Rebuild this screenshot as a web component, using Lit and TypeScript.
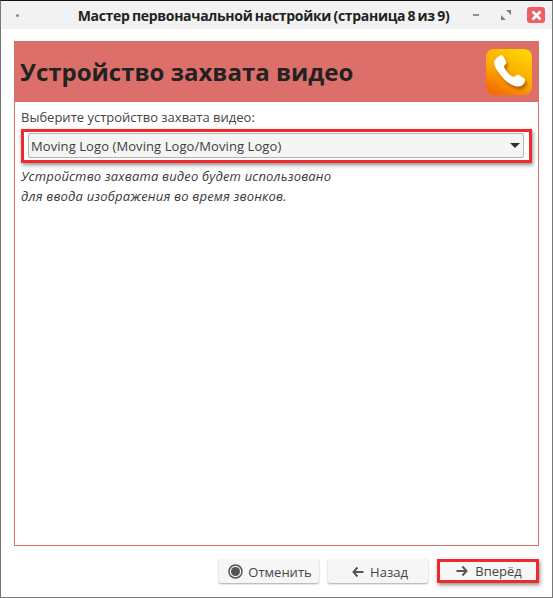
import { LitElement, html, css } from 'lit';
import { customElement } from 'lit/decorators.js';

@customElement('app-root')
export class AppRoot extends LitElement {
  static styles = css`
    :host {
      display: block;
      width: 553px;
      height: 598px;
      box-sizing: border-box;
      background: #fff;
      border-top: 1px solid #111;
      border-left: 1px solid #777;
      border-right: 1px solid #777;
      border-bottom: 1px solid #777;
      font-family: 'Open Sans', 'Noto Sans', sans-serif;
      color: #2e2e2e;
      font-size: 13px;
    }
    .window {
      height: 100%;
      display: flex;
      flex-direction: column;
    }
    .titlebar {
      height: 28px;
      flex: none;
      background: #f2f2f2;
      display: grid;
      grid-template-columns: auto 1fr auto;
      align-items: center;
      padding: 0 7px;
    }
    .dot {
      width: 3px;
      height: 3px;
      margin-left: 8px;
      border-radius: 50%;
      background: #8a8a8a;
    }
    .title {
      padding-left: 36px;
      text-align: center;
      font-weight: 700;
      font-size: 14px;
      letter-spacing: -0.3px;
      word-spacing: -1px;
      color: #222;
      white-space: nowrap;
    }
    .controls {
      display: flex;
      align-items: center;
      justify-content: flex-end;
      gap: 16px;
    }
    .controls svg {
      display: block;
    }
    .restore {
      margin-left: 5px;
    }
    .close {
      width: 18px;
      height: 16px;
      background: #ec5f63;
      border-radius: 3px;
      display: flex;
      align-items: center;
      justify-content: center;
    }
    .content {
      flex: 1;
      min-height: 0;
      display: flex;
      flex-direction: column;
      padding: 12px 13px 0 13px;
    }
    .frame {
      height: 505px;
      flex: none;
      box-sizing: border-box;
      border: 1px solid #dd6f6b;
      display: flex;
      flex-direction: column;
    }
    .banner {
      height: 61px;
      margin: -1px -1px 0;
      flex: none;
      background: #dd6f6b;
      display: flex;
      align-items: center;
      justify-content: space-between;
      padding: 0 7px 0 6px;
    }
    .banner h1 {
      margin: 0;
      font-size: 24px;
      line-height: 61px;
      font-weight: 700;
      color: #222;
      white-space: nowrap;
    }
    .logo {
      display: block;
      width: 46px;
      height: 46px;
    }
    .body {
      padding: 6px 6px 0;
    }
    .label {
      line-height: 18px;
      color: #444;
    }
    .mark {
      border: 3px solid #ee2a2f;
      box-shadow: 1px 2px 4px rgba(0, 0, 0, 0.45);
    }
    .select-mark {
      margin-top: 3px;
      padding: 1px 5px 2px 4px;
    }
    .select {
      height: 25px;
      box-sizing: border-box;
      border: 1px solid #b5b5b5;
      border-radius: 2px;
      background: #f5f5f5;
      display: flex;
      align-items: center;
      justify-content: space-between;
      padding: 0 3px 0 2px;
      color: #3d3d3d;
      letter-spacing: 0.08px;
    }
    .arrow {
      width: 0;
      height: 0;
      border-left: 5px solid transparent;
      border-right: 5px solid transparent;
      border-top: 5px solid #2e2e2e;
    }
    .hint {
      margin-top: 3px;
      font-style: italic;
      line-height: 20px;
      color: #3a3a3a;
      letter-spacing: 0.18px;
    }
    .buttons {
      display: flex;
      justify-content: flex-end;
      gap: 9px;
      margin-top: 13px;
    }
    button {
      height: 24px;
      box-sizing: border-box;
      border: 0;
      border-radius: 2px;
      background: #f6f6f6;
      box-shadow: 0 1px 2px rgba(0, 0, 0, 0.35);
      font: inherit;
      color: #444;
      display: flex;
      align-items: center;
      justify-content: center;
      gap: 5px;
      padding: 1px 0 0;
    }
    button svg {
      display: block;
    }
    .cancel {
      width: 100px;
      padding-left: 2px;
    }
    .back {
      width: 100px;
      gap: 6px;
      padding-left: 4px;
    }
    .next {
      width: 102px;
      gap: 7px;
      padding: 0 0 0 2px;
      border-radius: 0;
    }
  `;

  render() {
    return html`
      <div class="window">
        <div class="titlebar">
          <div class="dot"></div>
          <div class="title">Мастер первоначальной настройки (страница 8 из 9)</div>
          <div class="controls">
            <svg width="8" height="8" viewBox="0 0 8 8"><rect x="1" y="3" width="6" height="2" fill="#8f8f8f"/></svg>
            <svg class="restore" width="10" height="10" viewBox="0 0 10 10" fill="#7d7d7d"><path d="M5 0h5v5zM0 5l5 5H0z"/></svg>
            <div class="close">
              <svg width="11" height="11" viewBox="0 0 11 11"><path d="M1.500 1.500l8 8M9.500 1.500l-8 8" stroke="#fff" stroke-width="2.600"/></svg>
            </div>
          </div>
        </div>
        <div class="content">
          <div class="frame">
            <div class="banner">
              <h1>Устройство захвата видео</h1>
              <svg class="logo" viewBox="0 0 46 46">
                <defs>
                  <linearGradient id="lg" x1="0.75" y1="0" x2="0.25" y2="1">
                    <stop offset="0" stop-color="#ffd500"/>
                    <stop offset="0.55" stop-color="#fba800"/>
                    <stop offset="1" stop-color="#f56a00"/>
                  </linearGradient>
                  <filter id="blur" x="-20%" y="-20%" width="140%" height="140%">
                    <feGaussianBlur stdDeviation="1.500"/>
                  </filter>
                </defs>
                <rect width="46" height="46" rx="8" fill="url(#lg)"/>
                <path d="M12 8c2-2 4-2 5-1l3 5c1 1.500 0 3-1 4l-1 1c0 2 2 5 4 7s4 3.500 6 4l2-1.500c1-.8 2.500-1 3.500-.2l4.500 3c1.500 1 1.500 3 .5 4.500-2 3-4.500 4-7.500 3.700-5-.6-10.500-4.500-14-8.500C13 24 8.500 19 8 14c-.2-2.500 2-4.500 4-6z" fill="#8a3a00" opacity="0.55" filter="url(#blur)" transform="translate(2 3)"/>
                <path d="M12 8c2-2 4-2 5-1l3 5c1 1.500 0 3-1 4l-1 1c0 2 2 5 4 7s4 3.500 6 4l2-1.500c1-.8 2.500-1 3.500-.2l4.500 3c1.500 1 1.500 3 .5 4.500-2 3-4.500 4-7.500 3.700-5-.6-10.500-4.500-14-8.500C13 24 8.500 19 8 14c-.2-2.500 2-4.500 4-6z" fill="#fff"/>
              </svg>
            </div>
            <div class="body">
              <div class="label">Выберите устройство захвата видео:</div>
              <div class="mark select-mark">
                <div class="select">
                  <span>Moving Logo (Moving Logo/Moving Logo)</span>
                  <span class="arrow"></span>
                </div>
              </div>
              <div class="hint">Устройство захвата видео будет использовано<br />для ввода изображения во время звонков.</div>
            </div>
          </div>
          <div class="buttons">
            <button class="cancel">
              <svg width="15" height="15" viewBox="0 0 15 15"><circle cx="7.500" cy="7.500" r="6.500" fill="none" stroke="#555" stroke-width="1.500"/><circle cx="7.500" cy="7.500" r="4.500" fill="#555"/></svg>
              Отменить
            </button>
            <button class="back">
              <svg width="12" height="12" viewBox="0 0 12 12"><path d="M5.500 1.500L1.500 6l4 4.500M2 6h9.500" fill="none" stroke="#555" stroke-width="2"/></svg>
              Назад
            </button>
            <button class="next mark">
              <svg width="12" height="12" viewBox="0 0 12 12"><path d="M6.500 1.500l4 4.500-4 4.500M10 6H.5" fill="none" stroke="#555" stroke-width="2"/></svg>
              Вперёд
            </button>
          </div>
        </div>
      </div>
    `;
  }
}
